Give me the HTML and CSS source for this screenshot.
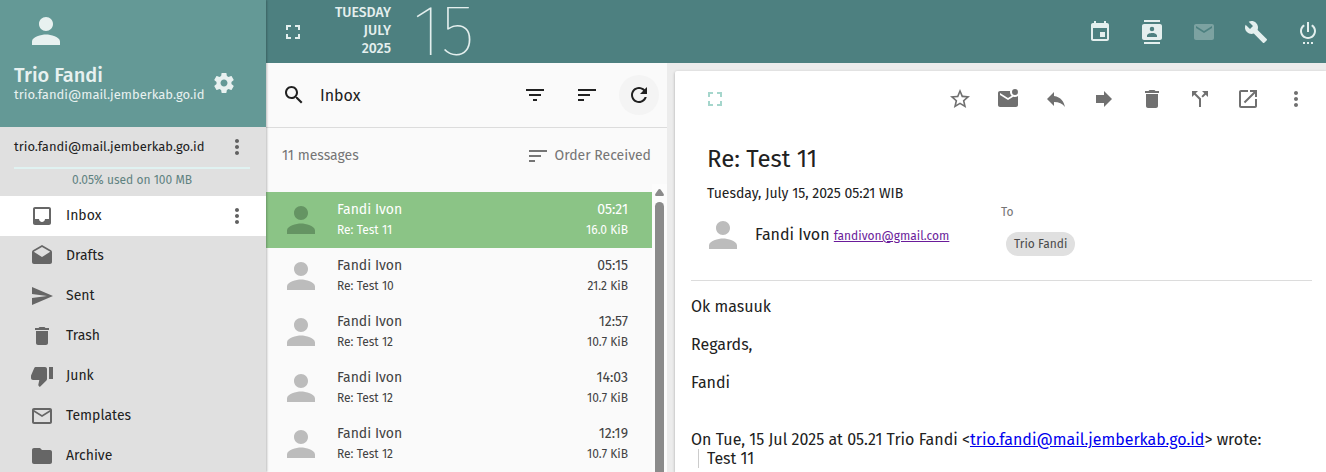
FILE: index.html
```html
<!DOCTYPE html>
<html lang="en">
<head>
<meta charset="utf-8">
<title>Inbox</title>
<link rel="stylesheet" href="styles.css">
</head>
<body>
<svg class="sprite" aria-hidden="true">
  <symbol id="person" viewBox="0 0 24 24"><path d="M12 12c2.21 0 4-1.79 4-4s-1.79-4-4-4-4 1.79-4 4 1.79 4 4 4zm0 2c-2.67 0-8 1.34-8 4v2h16v-2c0-2.66-5.33-4-8-4z"/></symbol>
  <symbol id="gear" viewBox="0 0 24 24"><path d="M19.43 12.98c.04-.32.07-.64.07-.98s-.03-.66-.07-.98l2.11-1.65c.19-.15.24-.42.12-.64l-2-3.46c-.12-.22-.39-.3-.61-.22l-2.49 1c-.52-.4-1.08-.73-1.69-.98l-.38-2.65C14.46 2.18 14.25 2 14 2h-4c-.25 0-.46.18-.49.42l-.38 2.65c-.61.25-1.17.59-1.69.98l-2.49-1c-.23-.09-.49 0-.61.22l-2 3.46c-.13.22-.07.49.12.64l2.11 1.65c-.04.32-.07.65-.07.98s.03.66.07.98l-2.11 1.65c-.19.15-.24.42-.12.64l2 3.46c.12.22.39.3.61.22l2.49-1c.52.4 1.08.73 1.69.98l.38 2.65c.03.24.24.42.49.42h4c.25 0 .46-.18.49-.42l.38-2.65c.61-.25 1.17-.59 1.69-.98l2.49 1c.23.09.49 0 .61-.22l2-3.46c.12-.22.07-.49-.12-.64l-2.11-1.65zM12 15.5c-1.93 0-3.5-1.57-3.5-3.5s1.57-3.5 3.5-3.5 3.5 1.57 3.5 3.5-1.57 3.5-3.5 3.5z"/></symbol>
  <symbol id="more" viewBox="0 0 24 24"><path d="M12 8c1.1 0 2-.9 2-2s-.9-2-2-2-2 .9-2 2 .9 2 2 2zm0 2c-1.1 0-2 .9-2 2s.9 2 2 2 2-.9 2-2-.9-2-2-2zm0 6c-1.1 0-2 .9-2 2s.9 2 2 2 2-.9 2-2-.9-2-2-2z"/></symbol>
  <symbol id="inbox" viewBox="0 0 24 24"><path d="M19 3H5c-1.1 0-2 .9-2 2v14c0 1.1.89 2 2 2h14c1.1 0 2-.9 2-2V5c0-1.1-.9-2-2-2zm0 12h-4c0 1.66-1.35 3-3 3s-3-1.34-3-3H5V5h14v10z"/></symbol>
  <symbol id="drafts" viewBox="0 0 24 24"><path d="M21.99 8c0-.72-.37-1.35-.94-1.7L12 1 2.95 6.3C2.38 6.65 2 7.28 2 8v10c0 1.1.9 2 2 2h16c1.1 0 2-.9 2-2l-.01-10zM12 13L3.74 7.84 12 3l8.26 4.84L12 13z"/></symbol>
  <symbol id="send" viewBox="0 0 24 24"><path d="M2.01 21L23 12 2.01 3 2 10l15 2-15 2z"/></symbol>
  <symbol id="trash" viewBox="0 0 24 24"><path d="M6 19c0 1.100.9 2 2 2h8c1.100 0 2-.9 2-2V7H6v12zM19 4h-3.500l-1-1h-5l-1 1H5v2h14V4z"/></symbol>
  <symbol id="junk" viewBox="0 0 24 24"><path d="M15 3H6c-.83 0-1.540.5-1.840 1.220l-3.020 7.050C1.050 11.500 1 11.740 1 12v2c0 1.100.9 2 2 2h6.310l-.95 4.570-.03.32c0 .41.170.79.440 1.060L9.830 23l6.590-6.590C16.780 16.050 17 15.550 17 15V5c0-1.100-.9-2-2-2zm4 0v12h4V3h-4z"/></symbol>
  <symbol id="mail-outline" viewBox="0 0 24 24"><path d="M20 4H4c-1.100 0-1.990.9-1.990 2L2 18c0 1.100.9 2 2 2h16c1.100 0 2-.9 2-2V6c0-1.100-.9-2-2-2zm0 14H4V8l8 5 8-5v10zm-8-7L4 6h16l-8 5z"/></symbol>
  <symbol id="folder" viewBox="0 0 24 24"><path d="M10 4H4c-1.100 0-1.990.9-1.990 2L2 18c0 1.100.9 2 2 2h16c1.100 0 2-.9 2-2V8c0-1.100-.9-2-2-2h-8l-2-2z"/></symbol>
  <symbol id="fullscreen" viewBox="0 0 24 24"><path d="M7 14H5v5h5v-2H7v-3zm-2-4h2V7h3V5H5v5zm12 7h-3v2h5v-5h-2v3zM14 5v2h3v3h2V5h-5z"/></symbol>
  <symbol id="calendar" viewBox="0 0 24 24"><path d="M17 12h-5v5h5v-5zM16 1v2H8V1H6v2H5c-1.110 0-1.990.9-1.990 2L3 19c0 1.100.89 2 2 2h14c1.100 0 2-.9 2-2V5c0-1.100-.9-2-2-2h-1V1h-2zm3 18H5V8h14v11z"/></symbol>
  <symbol id="contacts" viewBox="0 0 24 24"><path d="M20 0H4v2h16V0zM4 24h16v-2H4v2zM20 4H4c-1.100 0-2 .9-2 2v12c0 1.100.9 2 2 2h16c1.100 0 2-.9 2-2V6c0-1.100-.9-2-2-2zm-8 2.750a2.250 2.250 0 1 1 0 4.500 2.250 2.250 0 0 1 0-4.500zM17 17H7v-1.500c0-1.670 3.330-2.500 5-2.500s5 .83 5 2.500V17z"/></symbol>
  <symbol id="mail" viewBox="0 0 24 24"><path d="M20 4H4c-1.100 0-1.990.9-1.990 2L2 18c0 1.100.9 2 2 2h16c1.100 0 2-.9 2-2V6c0-1.100-.9-2-2-2zm0 4l-8 5-8-5V6l8 5 8-5v2z"/></symbol>
  <symbol id="wrench" viewBox="0 0 24 24"><path d="M22.700 19l-9.100-9.100c.9-2.300.4-5-1.500-6.900-2-2-5-2.400-7.400-1.300L9 6 6 9 1.600 4.700C.4 7.100.9 10.100 2.900 12.100c1.900 1.900 4.600 2.400 6.900 1.500l9.100 9.100c.4.400 1 .4 1.400 0l2.300-2.300c.5-.4.5-1.100.1-1.400z"/></symbol>
  <symbol id="power" viewBox="0 0 24 24"><path d="M7 24h2v-2H7v2zm4 0h2v-2h-2v2zm2-22h-2v10h2V2zm3.560 2.440l-1.450 1.450C16.840 6.940 18 8.830 18 11c0 3.310-2.690 6-6 6s-6-2.690-6-6c0-2.170 1.160-4.060 2.880-5.120L7.440 4.440C5.360 5.880 4 8.280 4 11c0 4.420 3.580 8 8 8s8-3.580 8-8c0-2.720-1.360-5.120-3.440-6.560zM15 24h2v-2h-2v2z"/></symbol>
  <symbol id="search" viewBox="0 0 24 24"><path d="M15.500 14h-.79l-.28-.27C15.410 12.590 16 11.110 16 9.500 16 5.910 13.090 3 9.500 3S3 5.910 3 9.500 5.910 16 9.500 16c1.610 0 3.090-.59 4.230-1.570l.27.28v.79l5 4.990L20.490 19l-4.990-5zm-6 0C7.010 14 5 11.990 5 9.500S7.010 5 9.500 5 14 7.010 14 9.500 11.990 14 9.500 14z"/></symbol>
  <symbol id="filter" viewBox="0 0 24 24"><path d="M10 18h4v-2h-4v2zM3 6v2h18V6H3zm3 7h12v-2H6v2z"/></symbol>
  <symbol id="sort" viewBox="0 0 24 24"><path d="M3 18h6v-2H3v2zM3 6v2h18V6H3zm0 7h12v-2H3v2z"/></symbol>
  <symbol id="refresh" viewBox="0 0 24 24"><path d="M17.650 6.350C16.200 4.900 14.210 4 12 4c-4.420 0-7.990 3.580-7.990 8s3.570 8 7.990 8c3.730 0 6.840-2.550 7.730-6h-2.080c-.82 2.330-3.040 4-5.650 4-3.310 0-6-2.690-6-6s2.690-6 6-6c1.660 0 3.140.69 4.220 1.780L13 11h7V4l-2.350 2.350z"/></symbol>
  <symbol id="star" viewBox="0 0 24 24"><path d="M22 9.240l-7.190-.62L12 2 9.190 8.630 2 9.240l5.460 4.730L5.820 21 12 17.270 18.180 21l-1.630-7.030L22 9.240zM12 15.400l-3.760 2.270 1-4.280-3.320-2.880 4.380-.38L12 6.100l1.710 4.040 4.380.38-3.320 2.880 1 4.280L12 15.400z"/></symbol>
  <symbol id="unread" viewBox="0 0 24 24"><path d="M22 8.980V18c0 1.100-.9 2-2 2H4c-1.100 0-2-.9-2-2V6c0-1.100.9-2 2-2h10.100c-.06.320-.1.660-.1 1 0 1.480.65 2.790 1.670 3.710L12 11 4 6v2l8 5 5.300-3.320c.54.2 1.100.320 1.700.320 1.130 0 2.160-.39 3-1.020zM16 5a3 3 0 1 0 6 0 3 3 0 0 0-6 0z"/></symbol>
  <symbol id="reply" viewBox="0 0 24 24"><path d="M10 9V5l-7 7 7 7v-4.100c5 0 8.500 1.600 11 5.100-1-5-4-10-11-11z"/></symbol>
  <symbol id="forward" viewBox="0 0 24 24"><path d="M12 8V4l8 8-8 8v-4H4V8z"/></symbol>
  <symbol id="split" viewBox="0 0 24 24"><path d="M14 4l2.290 2.290-2.880 2.880 1.420 1.420 2.880-2.880L20 10V4zm-4 0H4v6l2.290-2.290 4.710 4.700V20h2v-8.410l-5.290-5.300z"/></symbol>
  <symbol id="open" viewBox="0 0 24 24"><path d="M19 19H5V5h7V3H5c-1.110 0-2 .9-2 2v14c0 1.100.89 2 2 2h14c1.100 0 2-.9 2-2v-7h-2v7zM14 3v2h3.590l-9.830 9.830 1.410 1.410L19 6.410V10h2V3h-7z"/></symbol>
</svg>

<aside class="sidebar">
  <header class="profile">
    <svg class="avatar"><use href="#person"/></svg>
    <div class="profile-row">
      <div class="profile-text">
        <strong class="profile-name">Trio Fandi</strong>
        <span class="profile-mail">trio.fandi@mail.jemberkab.go.id</span>
      </div>
      <button class="icon-button" aria-label="Preferences"><svg class="icon"><use href="#gear"/></svg></button>
    </div>
  </header>
  <section class="account">
    <div class="account-row">
      <span class="account-mail">trio.fandi@mail.jemberkab.go.id</span>
      <button class="icon-button" aria-label="Account options"><svg class="icon"><use href="#more"/></svg></button>
    </div>
    <div class="quota-bar"></div>
    <p class="quota-text">0.05% used on 100 MB</p>
  </section>
  <nav class="folders">
    <div class="folder selected"><a class="folder-link" href="#"><svg class="icon"><use href="#inbox"/></svg>Inbox</a><button class="icon-button" aria-label="Folder options"><svg class="icon"><use href="#more"/></svg></button></div>
    <div class="folder"><a class="folder-link" href="#"><svg class="icon"><use href="#drafts"/></svg>Drafts</a></div>
    <div class="folder"><a class="folder-link" href="#"><svg class="icon"><use href="#send"/></svg>Sent</a></div>
    <div class="folder"><a class="folder-link" href="#"><svg class="icon"><use href="#trash"/></svg>Trash</a></div>
    <div class="folder"><a class="folder-link" href="#"><svg class="icon"><use href="#junk"/></svg>Junk</a></div>
    <div class="folder"><a class="folder-link" href="#"><svg class="icon"><use href="#mail-outline"/></svg>Templates</a></div>
    <div class="folder"><a class="folder-link" href="#"><svg class="icon"><use href="#folder"/></svg>Archive</a></div>
  </nav>
</aside>

<div class="main">
  <header class="topbar">
    <button class="icon-button" aria-label="Full screen"><svg class="icon"><use href="#fullscreen"/></svg></button>
    <div class="date"><span>TUESDAY</span><span>JULY</span><span>2025</span></div>
    <div class="day">15</div>
    <nav class="modules">
      <button class="icon-button" aria-label="Calendar"><svg class="icon"><use href="#calendar"/></svg></button>
      <button class="icon-button" aria-label="Address book"><svg class="icon"><use href="#contacts"/></svg></button>
      <button class="icon-button" aria-label="Mail" disabled><svg class="icon"><use href="#mail"/></svg></button>
      <button class="icon-button" aria-label="Administration"><svg class="icon"><use href="#wrench"/></svg></button>
      <button class="icon-button" aria-label="Disconnect"><svg class="icon"><use href="#power"/></svg></button>
    </nav>
  </header>

  <div class="panes">
    <section class="list-pane">
      <div class="list-toolbar">
        <button class="icon-button" aria-label="Search"><svg class="icon"><use href="#search"/></svg></button>
        <h1 class="list-title">Inbox</h1>
        <div class="list-actions">
          <button class="icon-button" aria-label="Filter"><svg class="icon"><use href="#filter"/></svg></button>
          <button class="icon-button" aria-label="Sort"><svg class="icon"><use href="#sort"/></svg></button>
          <button class="icon-button round" aria-label="Refresh"><svg class="icon"><use href="#refresh"/></svg></button>
        </div>
      </div>
      <div class="list-info">
        <span>11 messages</span>
        <span class="order"><svg class="icon"><use href="#sort"/></svg>Order Received</span>
      </div>
      <div class="list-body">
        <ul class="messages">
          <li class="message current"><svg class="avatar"><use href="#person"/></svg><div class="message-text"><div class="line"><span>Fandi Ivon</span><span>05:21</span></div><div class="line small"><span>Re: Test 11</span><span>16.0 KiB</span></div></div></li>
          <li class="message"><svg class="avatar"><use href="#person"/></svg><div class="message-text"><div class="line"><span>Fandi Ivon</span><span>05:15</span></div><div class="line small"><span>Re: Test 10</span><span>21.2 KiB</span></div></div></li>
          <li class="message"><svg class="avatar"><use href="#person"/></svg><div class="message-text"><div class="line"><span>Fandi Ivon</span><span>12:57</span></div><div class="line small"><span>Re: Test 12</span><span>10.7 KiB</span></div></div></li>
          <li class="message"><svg class="avatar"><use href="#person"/></svg><div class="message-text"><div class="line"><span>Fandi Ivon</span><span>14:03</span></div><div class="line small"><span>Re: Test 12</span><span>10.7 KiB</span></div></div></li>
          <li class="message"><svg class="avatar"><use href="#person"/></svg><div class="message-text"><div class="line"><span>Fandi Ivon</span><span>12:19</span></div><div class="line small"><span>Re: Test 12</span><span>10.7 KiB</span></div></div></li>
        </ul>
        <div class="scrollbar" aria-hidden="true">
          <svg class="scroll-up" viewBox="0 0 9 7"><path d="M4.500 0Q5.200 0 5.600.6L8.700 5Q9.300 7 8 7H1Q-.3 7 .3 5L3.400.6Q3.800 0 4.500 0z"/></svg>
          <div class="scroll-thumb"></div>
        </div>
      </div>
    </section>

    <article class="view">
      <div class="card">
        <div class="card-toolbar">
          <button class="icon-button expand" aria-label="Expand"><svg class="icon"><use href="#fullscreen"/></svg></button>
          <div class="card-actions">
            <button class="icon-button" aria-label="Flag"><svg class="icon"><use href="#star"/></svg></button>
            <button class="icon-button" aria-label="Mark as unread"><svg class="icon"><use href="#unread"/></svg></button>
            <button class="icon-button" aria-label="Reply"><svg class="icon"><use href="#reply"/></svg></button>
            <button class="icon-button" aria-label="Forward"><svg class="icon"><use href="#forward"/></svg></button>
            <button class="icon-button" aria-label="Delete"><svg class="icon"><use href="#trash"/></svg></button>
            <button class="icon-button" aria-label="Move"><svg class="icon"><use href="#split"/></svg></button>
            <button class="icon-button" aria-label="Open in window"><svg class="icon"><use href="#open"/></svg></button>
            <button class="icon-button" aria-label="More"><svg class="icon"><use href="#more"/></svg></button>
          </div>
        </div>
        <header class="mail-head">
          <h2 class="subject">Re: Test 11</h2>
          <time class="sent">Tuesday, July 15, 2025 05:21 WIB</time>
          <div class="people">
            <div class="from">
              <svg class="avatar"><use href="#person"/></svg>
              <p class="from-text">Fandi Ivon <a class="from-mail" href="#">fandivon@gmail.com</a></p>
            </div>
            <div class="to"><span class="to-label">To</span><span class="chip">Trio Fandi</span></div>
          </div>
        </header>
        <div class="mail-body">
          <p>Ok masuuk</p>
          <p>Regards,</p>
          <p>Fandi</p>
          <div class="quote-intro">On Tue, 15 Jul 2025 at 05.21 Trio Fandi &lt;<a href="#">trio.fandi@mail.jemberkab.go.id</a>&gt; wrote:</div>
          <blockquote class="quote">Test 11</blockquote>
        </div>
      </div>
    </article>
  </div>
</div>
</body>
</html>
```
FILE: styles.css
```css
* { box-sizing: border-box; }

body {
  margin: 0;
  height: 100vh;
  display: flex;
  overflow: hidden;
  background: #ececec;
  color: #212121;
  font: 14px/20px "Fira Sans", Roboto, "Liberation Sans", sans-serif;
}

h1, h2, p, ul { margin: 0; padding: 0; font-weight: 400; }

.sprite { display: none; }

.icon { width: 24px; height: 24px; fill: currentColor; flex: none; display: block; }
.avatar { width: 42px; height: 42px; fill: currentColor; flex: none; display: block; }

.icon-button {
  display: flex;
  align-items: center;
  justify-content: center;
  flex: none;
  width: 40px;
  height: 40px;
  padding: 0;
  border: 0;
  border-radius: 50%;
  background: none;
  color: inherit;
}

/* Sidebar */
.sidebar {
  flex: none;
  width: 266px;
  background: #e0e0e0;
  z-index: 1;
  box-shadow: 1px 0 2px rgba(0, 0, 0, .25);
}
.profile { background: #649996; color: #e8f1f0; padding: 10px 22px 24px 14px; }
.profile .avatar { margin-left: 11px; }
.profile-row { display: flex; justify-content: space-between; align-items: center; padding-top: 11px; }
.profile-text { display: flex; flex-direction: column; }
.profile-name { font-size: 20px; line-height: 24px; font-weight: 500; }
.profile-mail { font-size: 13px; line-height: 16px; }

.account { padding: 0 16px 5px 14px; }
.account-row { display: flex; justify-content: space-between; align-items: center; margin-right: -7px; color: #212121; }
.account-mail { font-size: 13px; }
.account .icon-button, .folder .icon-button { color: #616161; }
.quota-bar { height: 2px; background: #e0f2f1; }
.quota-text { font-size: 12px; line-height: 22px; text-align: center; color: #5f8280; }

.folder { display: flex; align-items: center; justify-content: space-between; height: 40px; padding: 0 9px 0 30px; }
.folder.selected { background: #fff; }
.folder-link { display: flex; align-items: center; gap: 12px; color: #212121; text-decoration: none; }
.folder-link .icon { color: #666; }

/* Top bar */
.main { flex: 1; min-width: 0; display: flex; flex-direction: column; }
.topbar {
  display: flex;
  align-items: center;
  flex: none;
  height: 63px;
  padding-left: 7px;
  background: #4d8080;
  color: #e4efee;
}
.date {
  display: flex;
  flex-direction: column;
  align-items: flex-end;
  width: 78px;
  padding-bottom: 2px;
  font-weight: 500;
  line-height: 18px;
}
.day { margin-left: 22px; font-size: 71px; line-height: 63px; font-weight: 200; }
.modules { display: flex; gap: 12px; margin-left: auto; margin-right: -2px; }
.modules .icon-button:disabled { color: #7ca2a1; }

/* Message list */
.panes { flex: 1; min-height: 0; display: flex; }
.list-pane { flex: none; width: 401px; background: #fafafa; display: flex; flex-direction: column; }
.list-toolbar { display: flex; align-items: center; flex: none; height: 65px; padding: 0 8px; border-bottom: 1px solid #dcdcdc; }
.list-title { font-size: 16px; line-height: 24px; padding-top: 2px; margin-left: 6px; }
.list-actions { display: flex; gap: 12px; margin-left: auto; }
.round { background: #f4f4f4; }
.list-info { display: flex; justify-content: space-between; align-items: center; flex: none; height: 56px; padding: 0 16px; color: #757575; }
.order { display: flex; align-items: center; gap: 4px; }
.list-body { flex: 1; min-height: 0; display: flex; }
.messages { flex: 1; list-style: none; padding-top: 8px; }
.message { display: flex; align-items: center; height: 56px; padding: 0 24px 0 14px; gap: 15px; }
.message .avatar { color: #bcbcbc; }
.message.current { background: #8bc486; color: #fff; }
.message.current .avatar { color: #659463; }
.message-text { flex: 1; padding-bottom: 2px; color: #424242; }
.message.current .message-text { color: #fff; }
.line { display: flex; justify-content: space-between; line-height: 21px; }
.line.small { font-size: 12px; line-height: 20px; }
.scrollbar { flex: none; width: 15px; display: flex; flex-direction: column; align-items: center; gap: 6px; padding-top: 5px; background: #fcfcfc; }
.scroll-up { width: 9px; height: 7px; fill: #8b8b8b; flex: none; }
.scroll-thumb { flex: 1; width: 9px; border-radius: 5px 5px 0 0; background: #8b8b8b; }

/* Message view */
.view { flex: 1; min-width: 0; display: flex; padding: 8px 0 0 8px; }
.card { flex: 1; min-width: 0; background: #fff; border-radius: 2px 0 0 0; box-shadow: 0 1px 3px rgba(0, 0, 0, .3); padding: 8px 14px 0 16px; }
.card-toolbar { display: flex; justify-content: space-between; color: #707070; }
.expand { color: #a5d6cc; margin-left: 4px; }
.card-actions { display: flex; gap: 8px; margin-right: -4px; }
.mail-head { padding: 24px 16px; border-bottom: 1px solid #dcdcdc; }
.subject { font-size: 24px; line-height: 32px; }
.sent { display: block; margin-top: 9px; }
.people { display: flex; }
.from { display: flex; align-items: center; width: 294px; margin-left: -5px; gap: 11px; padding-top: 10px; }
.from .avatar { color: #bcbcbc; }
.from-text { font-size: 16px; white-space: nowrap; }
.from-mail { font-size: 12px; color: #6a1b9a; }
.to { display: flex; flex-direction: column; align-items: flex-start; gap: 12px; margin-left: 5px; font-size: 12px; line-height: 16px; color: #757575; }
.chip { margin-left: 5px; padding: 0 8px; border-radius: 12px; line-height: 24px; background: #e0e0e0; color: #4a4a4a; }
.mail-body { padding-top: 16px; font-size: 16px; line-height: 19px; }
.mail-body p { margin-bottom: 19px; }
.mail-body a { color: #00e; }
.quote-intro { padding-top: 19px; }
.quote { margin: 0 0 0 7px; padding-left: 8px; border-left: 1px solid #ccc; }
```
